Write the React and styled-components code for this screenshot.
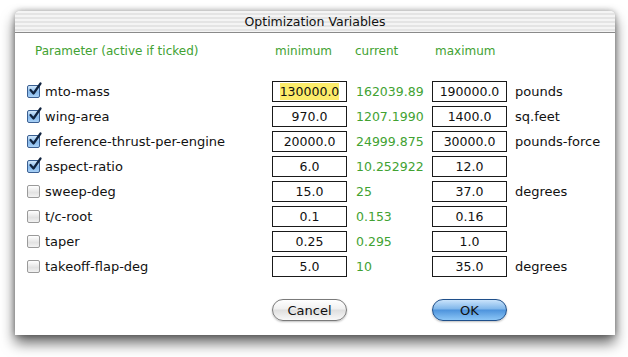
import React from "react";
import styled, { createGlobalStyle } from "styled-components";

const GlobalStyle = createGlobalStyle`
  html, body {
    margin: 0;
    padding: 0;
    background: #ffffff;
  }
  body {
    font-family: "DejaVu Sans", "Liberation Sans", sans-serif;
  }
`;

const Page = styled.div`
  width: 628px;
  height: 357px;
  padding: 11px 0 0 15px;
  box-sizing: border-box;
`;

const Window = styled.div`
  width: 600px;
  background: #ffffff;
  border-radius: 5px 5px 0 0;
  box-shadow: 0 8px 14px rgba(0, 0, 0, 0.6), 0 0 6px rgba(0, 0, 0, 0.35);
`;

const TitleBar = styled.div`
  height: 21px;
  border-bottom: 1px solid #8a8a8a;
  border-radius: 5px 5px 0 0;
  background: repeating-linear-gradient(
    to bottom,
    #f4f4f4 0px,
    #f4f4f4 2px,
    #e4e4e4 2px,
    #e4e4e4 4px
  );
  display: flex;
  align-items: center;
  justify-content: center;
  font-size: 12.5px;
  color: #111;
`;

const Content = styled.div`
  padding: 10px 0 14px 12px;
`;

const Header = styled.div`
  display: grid;
  grid-template-columns: 245px 80px 80px 80px;
  height: 16px;
  margin-bottom: 22px;
  font-size: 12px;
  line-height: 16px;
  color: #42a232;
`;

const HeadCell = styled.div`
  padding-left: ${(p) => p.$indent}px;
`;

const Grid = styled.div`
  display: grid;
  grid-template-columns: 245px 75px 85px 75px auto;
  grid-auto-rows: 21px;
  row-gap: 4px;
  font-size: 12.5px;
  color: #111;
`;

const Param = styled.label`
  display: flex;
  align-items: center;
  gap: 5px;
  font-size: 13px;
`;

const Check = styled.span`
  width: 11px;
  height: 11px;
  border-radius: 2px;
  border: 1px solid ${(p) => (p.$on ? "#3a5f92" : "#9a9a9a")};
  background: ${(p) =>
    p.$on
      ? "linear-gradient(#d2e8fb, #86b9ec 55%, #a8d0f6)"
      : "linear-gradient(#ffffff, #e2e2e2 60%, #f2f2f2)"};
  display: flex;
  align-items: center;
  justify-content: center;
  position: relative;
`;

const Mark = styled.svg`
  position: absolute;
  left: 0px;
  top: -4px;
`;

const Field = styled.div`
  border: 1px solid #1a1a1a;
  box-sizing: border-box;
  display: flex;
  align-items: center;
  justify-content: center;
  background: #fff;
`;

const Selected = styled.span`
  background: #fcec6a;
  padding: 1px 0;
`;

const Current = styled.div`
  padding-left: 9px;
  display: flex;
  align-items: center;
  color: #42a232;
`;

const Unit = styled.div`
  padding-left: 8px;
  display: flex;
  align-items: center;
  font-size: 13px;
`;

const Buttons = styled.div`
  display: grid;
  grid-template-columns: 245px 75px 85px 75px;
  margin-top: 22px;
  height: 22px;
`;

const Button = styled.div`
  grid-column: ${(p) => p.$col};
  height: 22px;
  box-sizing: border-box;
  border-radius: 11px;
  display: flex;
  align-items: center;
  justify-content: center;
  font-size: 13px;
  color: #111;
  border: 1px solid ${(p) => (p.$primary ? "#1f4f8a" : "#7a7a7a")};
  background: ${(p) =>
    p.$primary
      ? "linear-gradient(#c9e3fb 0%, #7fb6ea 45%, #4d93dc 50%, #8cc6f6 100%)"
      : "linear-gradient(#ffffff 0%, #f0f0f0 45%, #dedede 50%, #f8f8f8 100%)"};
  box-shadow: 0 1px 2px rgba(0, 0, 0, 0.25);
`;

const rows = [
  { name: "mto-mass", on: true, min: "130000.0", cur: "162039.89", max: "190000.0", unit: "pounds", sel: true },
  { name: "wing-area", on: true, min: "970.0", cur: "1207.1990", max: "1400.0", unit: "sq.feet" },
  { name: "reference-thrust-per-engine", on: true, min: "20000.0", cur: "24999.875", max: "30000.0", unit: "pounds-force" },
  { name: "aspect-ratio", on: true, min: "6.0", cur: "10.252922", max: "12.0", unit: "" },
  { name: "sweep-deg", on: false, min: "15.0", cur: "25", max: "37.0", unit: "degrees" },
  { name: "t/c-root", on: false, min: "0.1", cur: "0.153", max: "0.16", unit: "" },
  { name: "taper", on: false, min: "0.25", cur: "0.295", max: "1.0", unit: "" },
  { name: "takeoff-flap-deg", on: false, min: "5.0", cur: "10", max: "35.0", unit: "degrees" },
];

function CheckBox({ on }) {
  return (
    <Check $on={on}>
      {on && (
        <Mark width="14" height="14" viewBox="0 0 14 14">
          <path d="M2.5 8 L5.5 11.5 L12.5 1.5" fill="none" stroke="#10233f" strokeWidth="2.2" strokeLinecap="round" strokeLinejoin="round" />
        </Mark>
      )}
    </Check>
  );
}

export default function App() {
  return (
    <>
      <GlobalStyle />
      <Page>
        <Window>
          <TitleBar>Optimization Variables</TitleBar>
          <Content>
            <Header>
              <HeadCell $indent={8}>Parameter (active if ticked)</HeadCell>
              <HeadCell $indent={3}>minimum</HeadCell>
              <HeadCell $indent={3}>current</HeadCell>
              <HeadCell $indent={3}>maximum</HeadCell>
            </Header>
            <Grid>
              {rows.map((r) => (
                <React.Fragment key={r.name}>
                  <Param>
                    <CheckBox on={r.on} />
                    {r.name}
                  </Param>
                  <Field>{r.sel ? <Selected>{r.min}</Selected> : r.min}</Field>
                  <Current>{r.cur}</Current>
                  <Field>{r.max}</Field>
                  <Unit>{r.unit}</Unit>
                </React.Fragment>
              ))}
            </Grid>
            <Buttons>
              <Button $col={2}>Cancel</Button>
              <Button $col={4} $primary>OK</Button>
            </Buttons>
          </Content>
        </Window>
      </Page>
    </>
  );
}
